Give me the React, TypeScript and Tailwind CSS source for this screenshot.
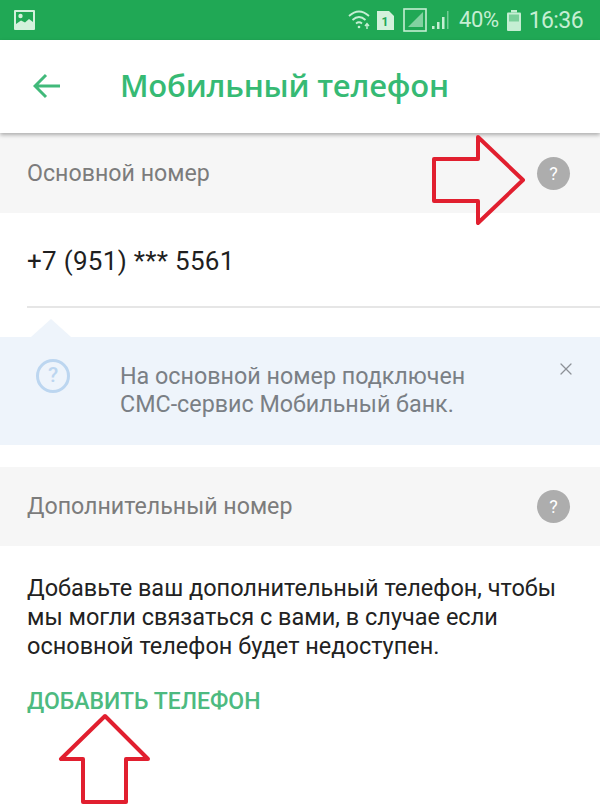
import React from 'react';
import { X } from 'lucide-react';

const HelpDot = () => (
  <div className="w-[33px] h-[33px] rounded-full bg-[#adadad] flex items-center justify-center text-white text-[18px]">?</div>
);

const SectionHead = ({ title, className = '' }: { title: string; className?: string }) => (
  <div className={`flex items-center justify-between pl-[27px] pr-[30px] bg-[#f6f6f6] ${className}`}>
    <span className={`text-[23.2px] text-[#7c7c7c]`}>{title}</span>
    <HelpDot />
  </div>
);

// значки статус-бара
const StatusBar = () => (
  <div className="h-10 bg-[#20a855] flex items-center pl-[14px] pr-[17px] text-[#c5eed3]">
    <svg width="21" height="21" viewBox="0 0 21 21" className="mt-[1px]">
      <rect x="0" y="0" width="21" height="20" rx="1" fill="#d3f1dc" />
      <rect x="2" y="2" width="17" height="12" fill="#20a855" />
      <circle cx="6.5" cy="6" r="2.2" fill="#d3f1dc" />
      <path d="M2 14 L7 10.5 L11 12.5 L15 9 L19 12 V15 H2 Z" fill="#d3f1dc" />
    </svg>
    <div className="ml-auto flex items-center">
      <svg width="26" height="22" viewBox="0 0 26 22" fill="none" stroke="currentColor" strokeWidth="1.8">
        <path d="M1 7 Q11 -2 21 7" />
        <path d="M4.5 11 Q11 5 17.5 11" />
        <path d="M8 14.5 Q11 12 14 14.5" />
        <circle cx="11" cy="18" r="1.3" fill="currentColor" stroke="none" />
        <path d="M19 20 V15 M17 17 L19 14.5 L21 17" strokeWidth="1.4" />
      </svg>
      <svg width="17" height="19" viewBox="0 0 17 19" className="ml-[3px]">
        <path d="M0 0 H12 L17 5 V19 H0 Z" fill="#d3f1dc" />
        <text x="8" y="15" fontSize="12" fontWeight="700" textAnchor="middle" fill="#20a855" fontFamily="Roboto, sans-serif">1</text>
      </svg>
      <svg width="24" height="24" viewBox="0 0 24 24" className="ml-[9px]">
        <rect x="1" y="1" width="22" height="22" fill="none" stroke="currentColor" strokeWidth="1.6" />
        <path d="M5 19 L20 4 V19 Z" fill="currentColor" opacity="0.6" />
      </svg>
      <svg width="18" height="22" viewBox="0 0 18 22" className="ml-[5px]" fill="currentColor">
        <rect x="0" y="17" width="2.5" height="3" />
        <rect x="5" y="13" width="2.5" height="7" />
        <rect x="10" y="8" width="2.5" height="12" />
        <rect x="15" y="2" width="1.5" height="18" opacity="0.5" />
      </svg>
      <span className="ml-[9px] text-[22px] leading-none tracking-[-0.4px]">40%</span>
      <svg width="14" height="21" viewBox="0 0 14 21" className="ml-[8px]">
        <rect x="4" y="0" width="6" height="2.5" fill="currentColor" />
        <rect x="0" y="2.5" width="14" height="18.5" rx="1" fill="currentColor" />
        <rect x="2" y="4.5" width="10" height="7" fill="#20a855" opacity="0.45" />
      </svg>
      <span className="ml-[8px] text-[23px] leading-none tracking-[-0.6px]">16:36</span>
    </div>
  </div>
);

export default function App() {
  return (
    <div className="relative w-[600px] h-[810px] overflow-hidden bg-white font-['Roboto','Noto_Sans',sans-serif]">
      <StatusBar />

      {/* шапка */}
      <div className="relative h-[93px] flex items-center bg-white shadow-[0_2px_4px_rgba(0,0,0,0.3)]">
        <svg width="28" height="26" viewBox="0 0 28 26" fill="none" stroke="#41b97a" strokeWidth="3" className="ml-[33px] mt-[-2px]">
          <path d="M27 13 H2 M13 2 L2 13 L13 24" />
        </svg>
        <h1 className="ml-[59px] text-[31px] font-semibold text-[#36ba74] font-['Open_Sans',sans-serif] tracking-[-0.2px] mt-[-2px]">Мобильный телефон</h1>
      </div>

      <SectionHead title="Основной номер" className="h-[80px]" />

      <div className="h-[93px] flex items-center px-[27px]">
        <span className="text-[26px] text-[#1f1f1f] mt-[4px] tracking-[0.3px]">+7 (951) *** 5561</span>
      </div>
      <div className="ml-[27px] h-[2px] bg-[#e6e6e6]" />

      {/* подсказка */}
      <div className="relative mt-[29px] h-[108px] bg-[#eef4fb] flex items-start pl-[36px] pr-[24px] pt-[25px]">
        <div className="absolute left-[31px] top-[-18px] w-0 h-0 border-l-[20px] border-r-[20px] border-b-[18px] border-l-transparent border-r-transparent border-b-[#eef4fb]" />
        <div className="w-[34px] h-[34px] mt-[-3px] rounded-full border-[3px] border-[#bcd6f0] flex items-center justify-center text-[#bcd6f0] text-[21px] font-medium shrink-0">?</div>
        <p className="ml-[50px] text-[23.3px] leading-[28px] text-[#7a7f85] flex-1 whitespace-nowrap">На основной номер подключен<br />СМС-сервис Мобильный банк.</p>
        <X size={20} strokeWidth={1.5} className="text-[#8d9197] mt-[-3px] shrink-0" />
      </div>

      <SectionHead title="Дополнительный номер" className="h-[79px] mt-[22px]" />

      <div className="pl-[27px] pr-[30px] pt-[28px]">
        <p className="text-[23.5px] leading-[29px] text-[#222] whitespace-nowrap">Добавьте ваш дополнительный телефон, чтобы<br />мы могли связаться с вами, в случае если<br />основной телефон будет недоступен.</p>
        <div className="mt-[27px] text-[23px] font-medium text-[#4dba80] leading-[28px]">ДОБАВИТЬ ТЕЛЕФОН</div>
      </div>

      {/* красные стрелки поверх снимка */}
      <svg width="600" height="810" viewBox="0 0 600 810" fill="none" stroke="#e11f2f" strokeWidth="4" strokeLinejoin="round" className="absolute inset-0 pointer-events-none">
        <path d="M434 159 H478 V137 L523 180 L478 223 V201 H434 Z" />
        <path d="M105 716 L61 759 H83 V802 H126 V759 L148 759 Z" />
      </svg>
    </div>
  );
}
